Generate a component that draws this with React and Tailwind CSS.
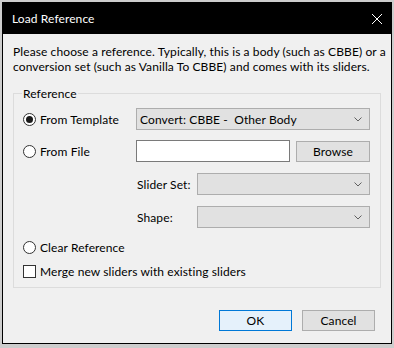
import React from 'react';

const font = { fontFamily: 'Lato, "Noto Sans", sans-serif' };

function Chevron() {
  return (
    <svg width="8" height="5" viewBox="0 0 8 5" className="shrink-0">
      <polyline points="0.5,0.5 4,4 7.5,0.5" fill="none" stroke="#606060" strokeWidth="1" />
    </svg>
  );
}

function Combo({ value, className = '' }) {
  return (
    <div
      className={`h-[22px] flex items-center justify-between border border-[#adadad] bg-[#e1e1e1] pl-[3px] pr-[7px] ${className}`}
    >
      <span className="whitespace-pre">{value}</span>
      <Chevron />
    </div>
  );
}

function Radio({ checked, label }) {
  return (
    <div className="flex items-center gap-[4px]">
      <div className="w-[13px] h-[13px] rounded-full border border-[#333] bg-white flex items-center justify-center">
        {checked && <div className="w-[7px] h-[7px] rounded-full bg-[#1a1a1a]" />}
      </div>
      <span>{label}</span>
    </div>
  );
}

function App() {
  return (
    <div className="w-[394px] h-[348px] bg-[#cdcdcd] pt-[2px] pl-[2px] text-[12px] leading-[15px] tracking-[0.1px] text-black" style={font}>
      <div className="w-[390px] h-[342px] border border-black flex flex-col bg-[#f0f0f0] overflow-hidden">
        {/* Title bar */}
        <div className="h-[31px] shrink-0 bg-black flex items-center justify-between pl-[9px] pr-[9px]">
          <span className="text-white text-[12px]">Load Reference</span>
          <svg width="10" height="10" viewBox="0 0 10 10">
            <path d="M0 0 L10 10 M10 0 L0 10" stroke="white" strokeWidth="1" />
          </svg>
        </div>

        {/* Body */}
        <div className="flex-1 flex flex-col pt-[10px] px-[10px]">
          <p className="whitespace-nowrap">
            Please choose a reference. Typically, this is a body (such as CBBE) or a
            <br />
            conversion set (such as Vanilla To CBBE) and comes with its sliders.
          </p>

          {/* Group box */}
          <div className="relative mt-[19px] h-[195px] shrink-0 border border-[#dcdcdc] pl-[9px] pr-[10px] pt-[14px]">
            <span className="absolute -top-[8px] left-[8px] px-[1px] bg-[#f0f0f0]">Reference</span>

            <div className="flex items-center h-[22px]">
              <div className="w-[113px]">
                <Radio checked label="From Template" />
              </div>
              <Combo value="Convert: CBBE -  Other Body" className="flex-1" />
            </div>

            <div className="flex items-center h-[22px] mt-[10px]">
              <div className="w-[113px]">
                <Radio label="From File" />
              </div>
              <div className="w-[154px] h-[22px] border border-[#7a7a7a] bg-white" />
              <div className="ml-[6px] flex-1 h-[21px] border border-[#adadad] bg-[#e1e1e1] flex items-center justify-center">
                Browse
              </div>
            </div>

            <div className="flex items-center h-[22px] mt-[11px] pl-[114px]">
              <span className="w-[60px]">Slider Set:</span>
              <Combo value="" className="flex-1" />
            </div>

            <div className="flex items-center h-[22px] mt-[11px] pl-[114px]">
              <span className="w-[60px]">Shape:</span>
              <Combo value="" className="flex-1" />
            </div>

            <div className="mt-[11px] h-[16px] flex items-center">
              <Radio label="Clear Reference" />
            </div>

            <div className="mt-[8px] h-[16px] flex items-center gap-[4px]">
              <div className="w-[13px] h-[13px] border border-[#333] bg-white" />
              <span>Merge new sliders with existing sliders</span>
            </div>
          </div>

          {/* Buttons */}
          <div className="mt-[22px] flex justify-end gap-[10px] pr-[6px]">
            <div className="w-[73px] h-[21px] border border-[#0078d7] bg-[#e5f1fb] flex items-center justify-center">
              OK
            </div>
            <div className="w-[73px] h-[21px] border border-[#adadad] bg-[#e1e1e1] flex items-center justify-center">
              Cancel
            </div>
          </div>
        </div>
      </div>
    </div>
  );
}

export default App;
